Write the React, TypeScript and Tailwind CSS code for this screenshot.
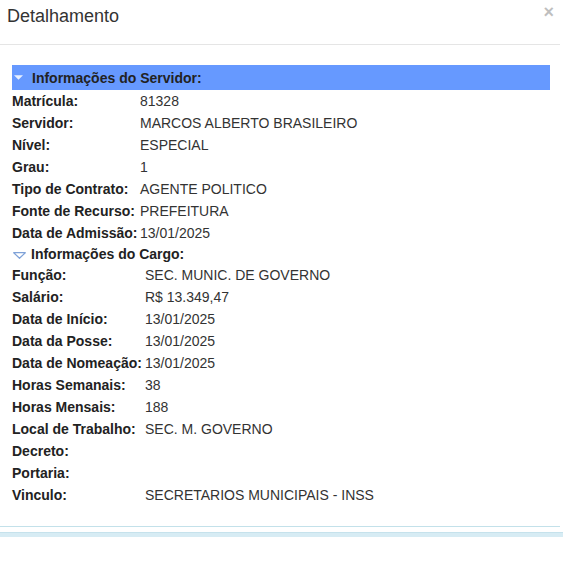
import React from "react";

type Row = { label: string; value: string };

const servidor: Row[] = [
  { label: "Matrícula:", value: "81328" },
  { label: "Servidor:", value: "MARCOS ALBERTO BRASILEIRO" },
  { label: "Nível:", value: "ESPECIAL" },
  { label: "Grau:", value: "1" },
  { label: "Tipo de Contrato:", value: "AGENTE POLITICO" },
  { label: "Fonte de Recurso:", value: "PREFEITURA" },
  { label: "Data de Admissão:", value: "13/01/2025" },
];

const cargo: Row[] = [
  { label: "Função:", value: "SEC. MUNIC. DE GOVERNO" },
  { label: "Salário:", value: "R$ 13.349,47" },
  { label: "Data de Início:", value: "13/01/2025" },
  { label: "Data da Posse:", value: "13/01/2025" },
  { label: "Data de Nomeação:", value: "13/01/2025" },
  { label: "Horas Semanais:", value: "38" },
  { label: "Horas Mensais:", value: "188" },
  { label: "Local de Trabalho:", value: "SEC. M. GOVERNO" },
  { label: "Decreto:", value: "" },
  { label: "Portaria:", value: "" },
  { label: "Vinculo:", value: "SECRETARIOS MUNICIPAIS - INSS" },
];

function RowItem({ r, wide }: { r: Row; wide: boolean }) {
  return (
    <div className="flex h-[22px] items-center">
      <div
        className={
          "whitespace-nowrap pr-[2px] font-bold text-[#222] " +
          (wide ? "min-w-[133px]" : "min-w-[128px]")
        }
      >
        {r.label}
      </div>
      <div className="whitespace-nowrap text-[#333]">{r.value}</div>
    </div>
  );
}

export default function App() {
  return (
    <div
      className="relative h-[566px] w-[566px] overflow-hidden bg-white text-[14px] leading-[16px]"
      style={{ fontFamily: '"Liberation Sans", Arial, sans-serif' }}
    >
      <div className="w-[560px]">
        <div className="relative h-[45px] border-b border-[#e5e5e5] pl-[7px] pt-[6px]">
          <div className="text-[18px] leading-[20px] text-[#333]">Detalhamento</div>
          <div className="absolute right-[6px] top-[3px] text-[18px] font-bold leading-[18px] text-[#000] opacity-25">
            ×
          </div>
        </div>
        <div className="pl-[12px] pt-[20px]">
          <div className="flex h-[25px] w-[538px] items-center bg-[#6699ff] font-bold text-[#222]">
            <svg width="9" height="5" viewBox="0 0 9 5" className="ml-[2px] mr-[9px]">
              <polygon points="0,0.3 9,0.3 4.5,4.8" fill="#e8f0ff" />
            </svg>
            Informações do Servidor:
          </div>
          {servidor.map((r) => (
            <RowItem key={r.label} r={r} wide={false} />
          ))}
          <div className="flex h-[20px] items-center font-bold text-[#222]">
            <svg width="13" height="7" viewBox="0 0 13 7" className="ml-[1px] mr-[5px] mt-[2px]">
              <polygon
                points="0.7,0.7 12.3,0.7 6.5,6.3"
                fill="#fff"
                stroke="#7fa2d8"
                strokeWidth="1.2"
                strokeLinejoin="round"
              />
            </svg>
            Informações do Cargo:
          </div>
          {cargo.map((r) => (
            <RowItem key={r.label} r={r} wide={true} />
          ))}
        </div>
        <div className="mt-[20px] h-px w-[560px] bg-[#c3e1ea]" />
        <div className="mt-[5px] h-[5px] w-[563px] border-t border-[#c6e2ec] bg-[#d7ecf4]" />
      </div>
    </div>
  );
}
